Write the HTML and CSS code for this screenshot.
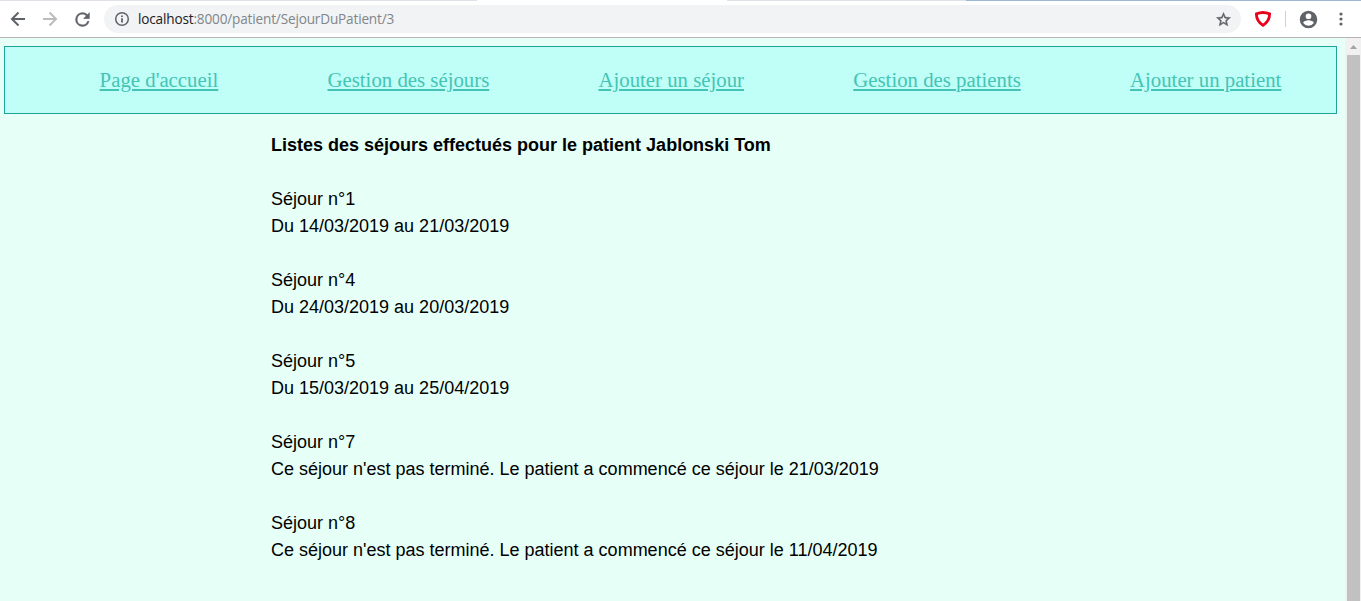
FILE: index.html
```html
<!DOCTYPE html>
<html lang="fr">
<head>
<meta charset="utf-8">
<title>Séjours du patient</title>
<link rel="stylesheet" href="styles.css">
</head>
<body>
<header class="toolbar">
  <div class="tab-edge"><i class="tab-left"></i><i class="tab-active"></i><i class="tab-right"></i><i class="tab-frame"></i></div>
  <div class="tools">
    <svg class="back" width="24" height="24" viewBox="0 0 24 24" fill="none" stroke="#5f6368" stroke-width="2"><path d="M20 12H7M13.500 5.500 7 12l6.500 6.500"/></svg>
    <svg class="forward" width="24" height="24" viewBox="0 0 24 24" fill="none" stroke="#babcbe" stroke-width="2"><path d="M5 12h13M11.500 5.500 18 12l-6.500 6.500"/></svg>
    <svg class="reload" width="21" height="21" viewBox="0 0 24 24" fill="#5f6368"><path d="M17.650 6.350A7.960 7.960 0 0 0 12 4a8 8 0 1 0 7.730 10h-2.080A6 6 0 1 1 12 6c1.660 0 3.140.69 4.220 1.780L13 11h7V4z" stroke="#5f6368" stroke-width=".4"/></svg>
    <div class="address">
      <svg class="info" width="16" height="16" viewBox="0 0 16 16"><circle cx="8" cy="8" r="6.300" fill="none" stroke="#5f6368" stroke-width="1.500"/><path d="M7.100 7.200h1.800v4.300H7.100zM7.100 4.400h1.800v1.700H7.100z" fill="#5f6368"/></svg>
      <span class="url"><b>localhost</b>:8000/patient/SejourDuPatient/3</span>
      <svg class="star" width="17" height="17" viewBox="0 0 24 24" fill="#5f6368"><path stroke="#5f6368" stroke-width=".6" d="m22 9.240-7.190-.62L12 2 9.190 8.630 2 9.240l5.460 4.730L5.820 21 12 17.270 18.180 21l-1.630-7.030zM12 15.400l-3.760 2.270 1-4.280-3.320-2.880 4.380-.38L12 6.100l1.710 4.040 4.380.38-3.320 2.880 1 4.280z"/></svg>
    </div>
    <svg class="shield" width="18" height="18" viewBox="0 0 18 18" fill="none" stroke="#e8001c" stroke-width="2.800"><path d="M2.400 3.900Q9 1.100 15.600 3.900Q15.600 10.800 9 15.300Q2.400 10.800 2.400 3.900z"/></svg>
    <i class="divider"></i>
    <svg class="person" width="21" height="21" viewBox="0 0 24 24" fill="#5f6368"><path d="M12 2a10 10 0 1 0 0 20 10 10 0 0 0 0-20zm0 3a3 3 0 1 1 0 6.500A3 3 0 0 1 12 5zm0 14.200a7.200 7.200 0 0 1-6-3.220c.03-1.990 4-3.080 6-3.080s5.970 1.090 6 3.080a7.200 7.200 0 0 1-6 3.220z"/></svg>
    <svg class="more" width="4" height="14" viewBox="0 0 4 14" fill="#5f6368"><circle cx="2" cy="2" r="1.600"/><circle cx="2" cy="7" r="1.600"/><circle cx="2" cy="12" r="1.600"/></svg>
  </div>
</header>
<div class="viewport">
  <div class="page">
    <nav class="menu">
      <a href="#">Page d'accueil</a>
      <a href="#">Gestion des séjours</a>
      <a href="#">Ajouter un séjour</a>
      <a href="#">Gestion des patients</a>
      <a href="#">Ajouter un patient</a>
    </nav>
    <main class="stays">
      <h1>Listes des séjours effectués pour le patient Jablonski Tom</h1>
      <p>Séjour n°1<br>Du 14/03/2019 au 21/03/2019</p>
      <p>Séjour n°4<br>Du 24/03/2019 au 20/03/2019</p>
      <p>Séjour n°5<br>Du 15/03/2019 au 25/04/2019</p>
      <p>Séjour n°7<br>Ce séjour n'est pas terminé. Le patient a commencé ce séjour le 21/03/2019</p>
      <p>Séjour n°8<br>Ce séjour n'est pas terminé. Le patient a commencé ce séjour le 11/04/2019</p>
    </main>
  </div>
  <div class="scrollbar">
    <svg width="15" height="17" viewBox="0 0 15 17"><path d="M4 11h7L7.500 7z" fill="#a3a3a3"/></svg>
    <div class="thumb"></div>
  </div>
</div>
</body>
</html>
```

FILE: styles.css
```css
* { box-sizing: border-box; }
body {
  margin: 0;
  height: 601px;
  overflow: hidden;
  display: flex;
  flex-direction: column;
  background: #e6fff7;
}
svg { display: block; flex: none; }

.toolbar { height: 38px; flex: none; background: #fff; border-bottom: 1px solid #b6b4b6; }
.tab-edge { display: flex; height: 1px; }
.tab-left { width: 477px; background: #dee1e6; }
.tab-active { width: 250px; background: #fff; }
.tab-right { width: 239px; background: #dee1e6; }
.tab-frame { flex: 1; background: #9db8d2; }
.tools { display: flex; align-items: center; height: 36px; padding-left: 5px; }
.forward { margin-left: 9px; }
.reload { margin-left: 10px; }
.address {
  display: flex;
  align-items: center;
  width: 1137px;
  height: 28px;
  margin-left: 11px;
  padding: 0 9px 0 10px;
  border-radius: 14px;
  background: #f1f3f4;
}
.url {
  flex: 1;
  margin-left: 8px;
  font: 13.6px/20px "Open Sans", "Noto Sans", sans-serif;
  letter-spacing: -0.17px;
  color: #80868b;
  white-space: nowrap;
}
.url b { font-weight: 400; color: #202124; }
.shield { margin-left: 13px; }
.divider { width: 1px; height: 16px; margin-left: 13px; background: #ced0d2; }
.person { margin-left: 12px; }
.more { margin-left: 20px; }

.viewport { flex: 1; display: flex; min-height: 0; }
.page { flex: 1; padding: 8px 8px 0 4px; }
.menu {
  display: flex;
  justify-content: space-around;
  align-items: center;
  height: 68px;
  padding-left: 40px;
  border: 1px solid #1fa597;
  background: #bffff7;
}
.menu a {
  font: 20.8px/24px "Liberation Serif", "Times New Roman", serif;
  color: #45c4b5;
}
.stays {
  margin: 18px 0 0 267px;
  font: 18px/27px "Liberation Sans", Arial, sans-serif;
  color: #000;
}
.stays h1 { margin: 0 0 27px; font-size: 18px; line-height: 27px; }
.stays p { margin: 0 0 27px; }

.scrollbar { width: 16px; padding: 0 1px 0 2px; background: #f1f1f1; }
.scrollbar svg { margin-left: -1px; }
.thumb { height: 546px; background: #c1c1c1; }
```
